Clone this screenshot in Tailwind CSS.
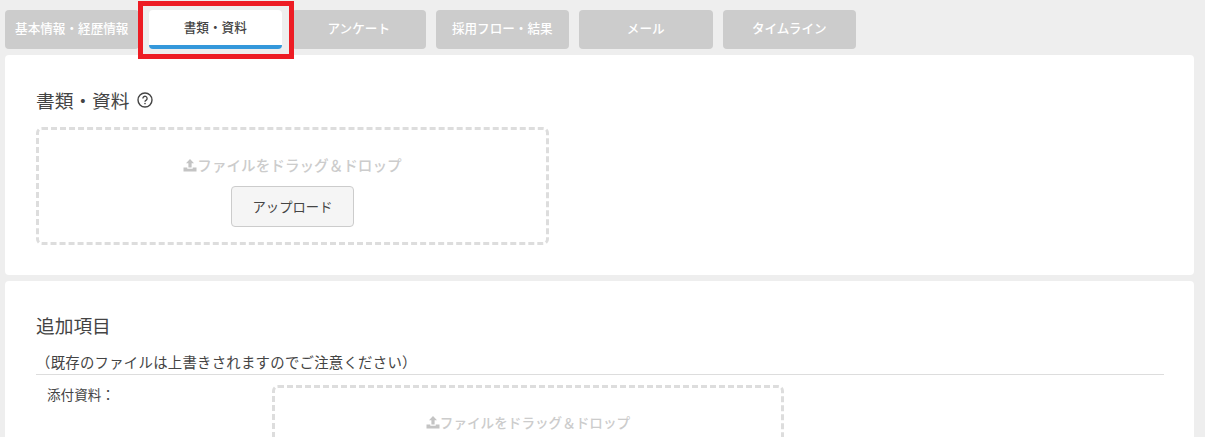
<!DOCTYPE html>
<html lang="ja">
  <head>
    <meta charset="UTF-8" />
    <meta name="viewport" content="width=device-width, initial-scale=1.0" />
    <title>書類・資料</title>
    <script src="https://cdn.jsdelivr.net/npm/@tailwindcss/browser@4"></script>
  </head>
  <body class="relative h-[437px] overflow-hidden bg-[#eeeeee] font-['Noto_Sans_CJK_JP','Noto_Sans',sans-serif] text-[#444444]">
    <!-- tabs -->
    <div class="flex gap-[10px] pl-[5px] pt-[10px] text-[12.6px] font-medium">
      <div class="flex h-[39px] w-[133.5px] items-center justify-center rounded bg-[#cccccc] pb-[3px] text-white">基本情報・経歴情報</div>
      <div class="flex h-[39px] w-[133.5px] items-center justify-center rounded border-b-4 border-[#3498db] bg-white text-[#444444]">書類・資料</div>
      <div class="flex h-[39px] w-[133.5px] items-center justify-center rounded bg-[#cccccc] pb-[3px] text-white">アンケート</div>
      <div class="flex h-[39px] w-[133.5px] items-center justify-center rounded bg-[#cccccc] pb-[3px] text-white">採用フロー・結果</div>
      <div class="flex h-[39px] w-[133.5px] items-center justify-center rounded bg-[#cccccc] pb-[3px] text-white">メール</div>
      <div class="flex h-[39px] w-[133.5px] items-center justify-center rounded bg-[#cccccc] pb-[3px] text-white">タイムライン</div>
    </div>

    <!-- annotation -->
    <div class="absolute left-[138px] top-[1px] h-[58px] w-[156px] border-[5px] border-[#ed1c24]"></div>

    <div class="mx-[5px] mt-[6px] flex w-[1189px] flex-col gap-[6px]">
      <section class="h-[220px] rounded bg-white pl-[31px] pr-[30px] pt-[32px]">
        <h2 class="flex h-[26px] items-center text-[18.72px] leading-[26px]">
          書類・資料
          <svg class="ml-[7px]" width="16" height="16" viewBox="0 0 16 16" fill="none">
            <circle cx="8" cy="8" r="7" stroke="#444444" stroke-width="1.4" />
            <path d="M5.9 6.4a2.1 2.1 0 1 1 3.3 1.7c-.8.5-1.2.9-1.2 1.7" stroke="#444444" stroke-width="1.3" />
            <circle cx="8" cy="11.6" r=".8" fill="#444444" />
          </svg>
        </h2>
        <div class="mt-[14px] flex h-[118px] w-[513px] flex-col items-center rounded-md border-[3px] border-dashed border-[#dddddd] pt-[25px]">
          <div class="flex h-[20px] items-center text-[14.6px] font-medium leading-[20px] text-[#cccccc]">
            <svg width="14" height="14" viewBox="0 0 14 14" fill="#c4c4c4">
              <path d="M7 1 11 5.2H8.6V9.6H5.4V5.2H3ZM.5 9.6H4.3V10.8H9.7V9.6H13.5V13.4H.5Z" />
            </svg>ファイルをドラッグ＆ドロップ
          </div>
          <button class="mt-[11px] h-[41px] w-[123px] rounded border border-[#cccccc] bg-[#f5f5f5] text-[13.33px] text-[#444444]">アップロード</button>
        </div>
      </section>

      <section class="h-[200px] rounded bg-white pl-[31px] pr-[30px] pt-[31px]">
        <h2 class="h-[26px] text-[18.72px] leading-[26px]">追加項目</h2>
        <div class="mt-[13px] h-[24px] border-b border-[#dddddd] text-[14.4px] leading-[22px] tracking-[0.25px]">（既存のファイルは上書きされますのでご注意ください）</div>
        <div class="mt-[10px] flex">
          <div class="w-[236px] pl-[11px] text-[13.6px] leading-[18px]">添付資料：</div>
          <div class="flex h-[118px] w-[512px] flex-col items-center rounded-md border-[3px] border-dashed border-[#dddddd] pt-[24px]">
            <div class="flex h-[20px] items-center text-[13.6px] font-medium leading-[20px] text-[#cccccc]">
              <svg width="14" height="14" viewBox="0 0 14 14" fill="#c4c4c4">
                <path d="M7 1 11 5.2H8.6V9.6H5.4V5.2H3ZM.5 9.6H4.3V10.8H9.7V9.6H13.5V13.4H.5Z" />
              </svg>ファイルをドラッグ＆ドロップ
            </div>
          </div>
        </div>
      </section>
    </div>
  </body>
</html>
